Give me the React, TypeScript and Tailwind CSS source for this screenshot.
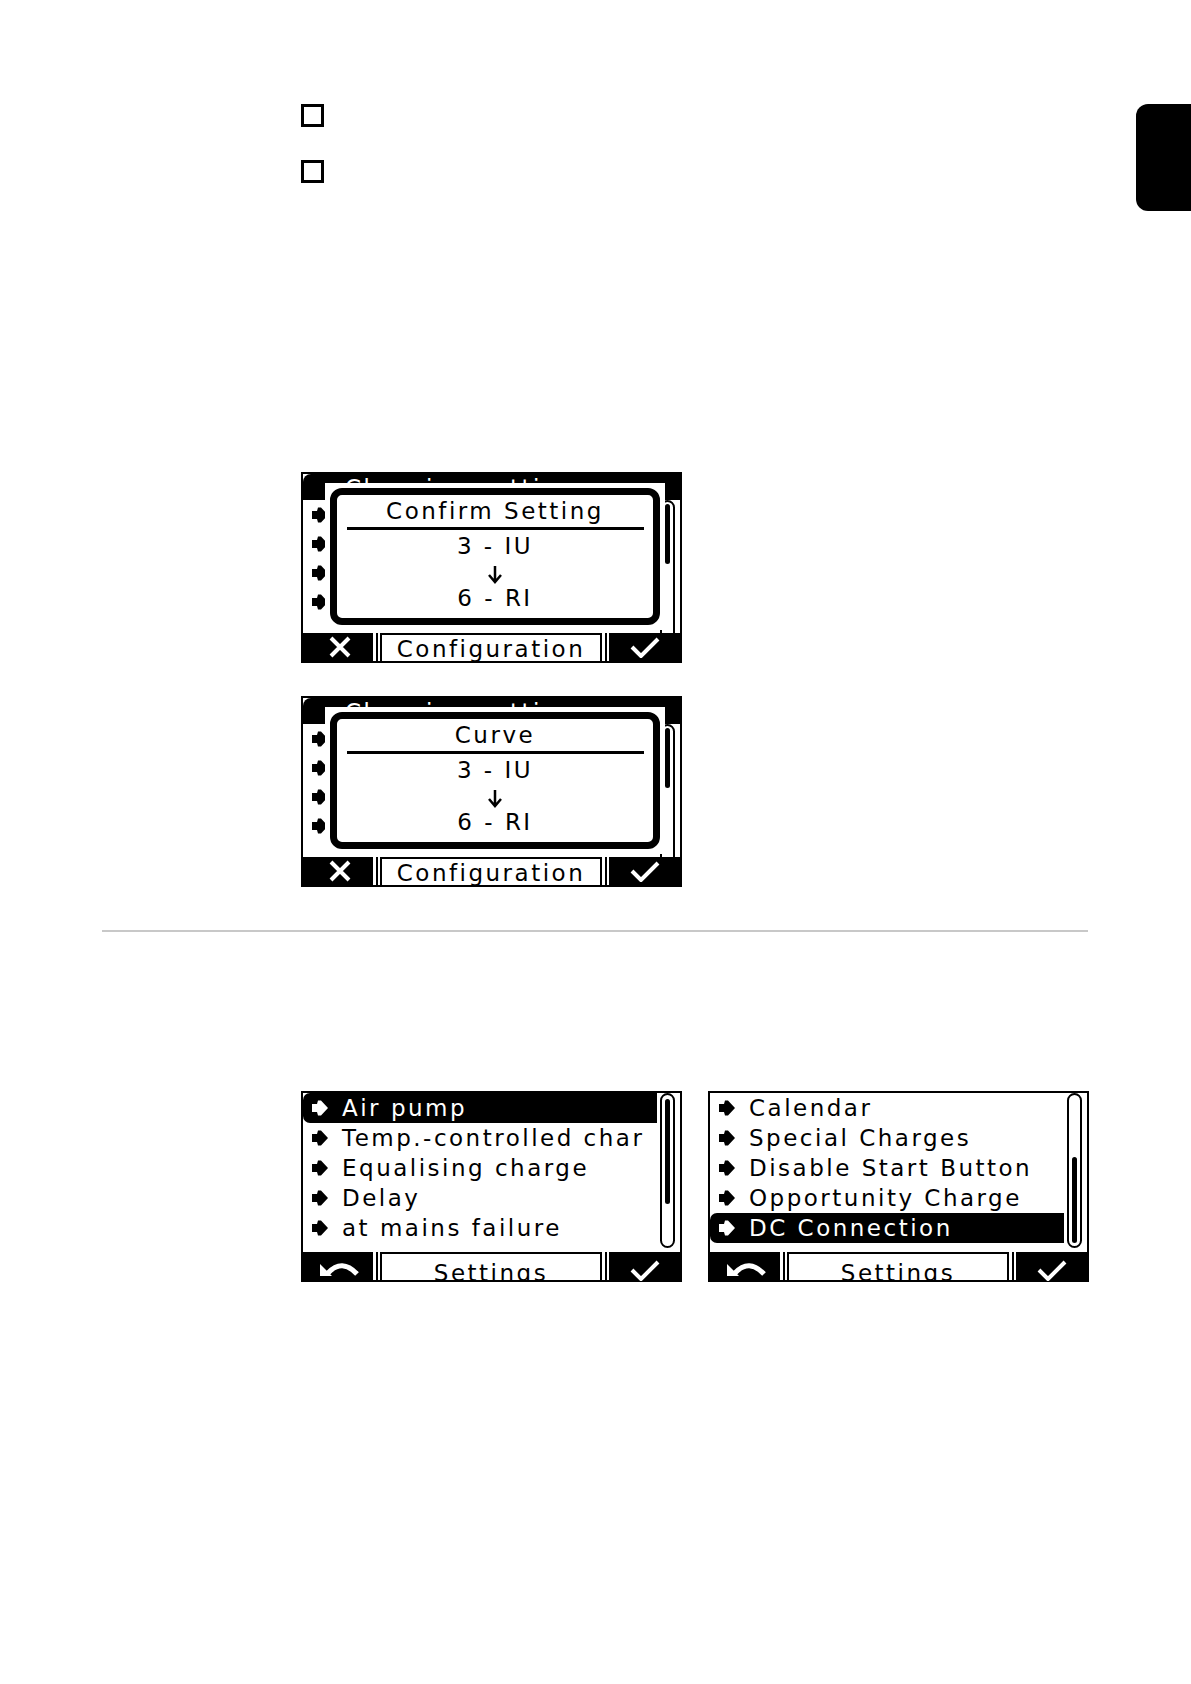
import React from 'react';

const lcd = "font-['DejaVu_Sans',sans-serif] text-[23px] leading-none tracking-[2.5px]";

function Bullet({ white = false }: { white?: boolean }) {
  return (
    <svg width="16" height="16" viewBox="0 0 16 16" className="shrink-0">
      <path
        d="M0 4 L5 4 L6 0.5 L9 0.5 L16 8 L9 15.5 L6 15.5 L5 12 L0 12 Z"
        fill={white ? '#fff' : '#000'}
      />
    </svg>
  );
}

function DownArrow() {
  return (
    <svg width="16" height="19" viewBox="0 0 16 19">
      <path d="M8 1 L8 17 M2 10 L8 17 L14 10" stroke="#000" strokeWidth="2.5" fill="none" />
    </svg>
  );
}

function CrossIcon() {
  return (
    <svg width="24" height="22" viewBox="0 0 24 22">
      <path d="M3 2 L21 20 M21 2 L3 20" stroke="#fff" strokeWidth="4" fill="none" />
    </svg>
  );
}

function CheckIcon() {
  return (
    <svg width="30" height="22" viewBox="0 0 30 22">
      <path d="M2 11 L11 20 L28 3" stroke="#fff" strokeWidth="4" fill="none" />
    </svg>
  );
}

function BackIcon() {
  return (
    <svg width="42" height="18" viewBox="0 0 42 18">
      <path d="M9 14 Q 23 -1 38 15" stroke="#fff" strokeWidth="5" fill="none" />
      <path d="M1 5 L1 17 L13 17 Z" fill="#fff" />
    </svg>
  );
}

function SoftKeys({
  left,
  label,
  textPad,
  iconPad,
}: {
  left: React.ReactNode;
  label: string;
  textPad: string;
  iconPad: string;
}) {
  return (
    <div className="flex h-[28px] bg-white">
      <div className={`w-[70px] bg-black flex justify-center pl-[4px] ${iconPad}`}>{left}</div>
      <div className="w-[3px]" />
      <div className="w-[2px] bg-black" />
      <div className="w-[2px]" />
      <div className={`w-[222px] border-2 border-b-0 border-black flex justify-center overflow-hidden ${textPad}`}>
        <span className={lcd}>{label}</span>
      </div>
      <div className="w-[3px]" />
      <div className="w-[2px] bg-black" />
      <div className="w-[2px]" />
      <div className={`w-[71px] bg-black flex justify-center ${iconPad}`}>
        <CheckIcon />
      </div>
    </div>
  );
}

function ScrollBar({ offset, size }: { offset: string; size: string }) {
  return (
    <div className="w-[15px] h-[155px] ml-[3px] mr-[5px] border-2 border-black rounded-full flex flex-col items-center shrink-0">
      <div className={`w-[5px] bg-black rounded-full ${offset} ${size}`} />
    </div>
  );
}

function MenuRow({ text, active = false, h = 'h-[30px]' }: { text?: string; active?: boolean; h?: string }) {
  return (
    <div
      className={`${h} flex items-center pl-[9px] gap-[14px] whitespace-nowrap ${
        active ? 'bg-black text-white rounded-l-[7px]' : 'text-black'
      }`}
    >
      <Bullet white={active} />
      {text && <span className={lcd}>{text}</span>}
    </div>
  );
}

function DialogScreen({ title }: { title: string }) {
  // menu rows behind the dialog: only their bullets peek out on the left
  const under = [0, 1, 2, 3];
  return (
    <div className="w-[381px] h-[191px] border-2 border-black bg-white flex flex-col">
      <div className="relative h-[159px] overflow-hidden">
        <div className="h-[26px] bg-black text-white pl-[42px] pt-[3px] rounded-tl-[8px]">
          <span className={lcd}>Charging settings</span>
        </div>
        <div className="flex">
          <div className="flex-1 min-w-0">
            {under.map((k) => (
              <MenuRow key={k} h="h-[29px]" />
            ))}
          </div>
          <ScrollBar offset="mt-[2px]" size="h-[60px]" />
        </div>
        <div className="absolute left-[22px] top-[9px] w-[340px] h-[147px] bg-white p-[5px]">
          <div className="relative h-full border-[7px] border-black rounded-[12px] flex flex-col items-center text-black">
            <div className={`${lcd} mt-[5px] h-[23px]`}>{title}</div>
            <div className="mt-[4px] w-[297px] h-[3px] bg-black" />
            <div className="mt-[5px] flex flex-col items-center">
              <div className={`${lcd} h-[26px] leading-[26px]`}>3 - IU</div>
              <div className="h-[26px] flex items-center">
                <DownArrow />
              </div>
              <div className={`${lcd} h-[26px] leading-[26px]`}>6 - RI</div>
            </div>
            <div className="absolute right-[2px] bottom-[2px] w-[3px] h-[3px] bg-white" />
          </div>
        </div>
      </div>
      <SoftKeys left={<CrossIcon />} label="Configuration" textPad="pt-[3px]" iconPad="pt-[3px]" />
    </div>
  );
}

function ListScreen({
  items,
  active,
  thumbOffset,
  thumbSize,
}: {
  items: string[];
  active: number;
  thumbOffset: string;
  thumbSize: string;
}) {
  return (
    <div className="w-[381px] h-[191px] border-2 border-black bg-white flex flex-col">
      <div className="h-[159px] flex">
        <div className="flex-1 min-w-0">
          {items.map((t, i) => (
            <MenuRow key={t} text={t} active={i === active} />
          ))}
        </div>
        <ScrollBar offset={thumbOffset} size={thumbSize} />
      </div>
      <SoftKeys left={<BackIcon />} label="Settings" textPad="pt-[8px]" iconPad="pt-[7px]" />
    </div>
  );
}

function Checkbox() {
  return <div className="w-[23px] h-[23px] border-[3px] border-black" />;
}

export default function App() {
  return (
    <div className="w-[1191px] h-[1684px] bg-white overflow-hidden">
      <div className="flex justify-between items-start pt-[104px]">
        <div className="flex flex-col gap-[33px] pl-[301px]">
          <Checkbox />
          <Checkbox />
        </div>
        <div className="w-[55px] h-[107px] bg-black rounded-l-[12px]" />
      </div>

      <div className="mt-[261px] pl-[301px] flex flex-col gap-[33px]">
        <DialogScreen title="Confirm Setting" />
        <DialogScreen title="Curve" />
      </div>

      <div className="mt-[43px] ml-[102px] w-[986px] h-[2px] bg-[#c8c8c8]" />

      <div className="mt-[159px] pl-[301px] flex gap-[26px]">
        <ListScreen
          items={['Air pump', 'Temp.-controlled char', 'Equalising charge', 'Delay', 'at mains failure']}
          active={0}
          thumbOffset="mt-[4px]"
          thumbSize="h-[105px]"
        />
        <ListScreen
          items={['Calendar', 'Special Charges', 'Disable Start Button', 'Opportunity Charge', 'DC Connection']}
          active={4}
          thumbOffset="mt-[62px]"
          thumbSize="h-[86px]"
        />
      </div>
    </div>
  );
}
